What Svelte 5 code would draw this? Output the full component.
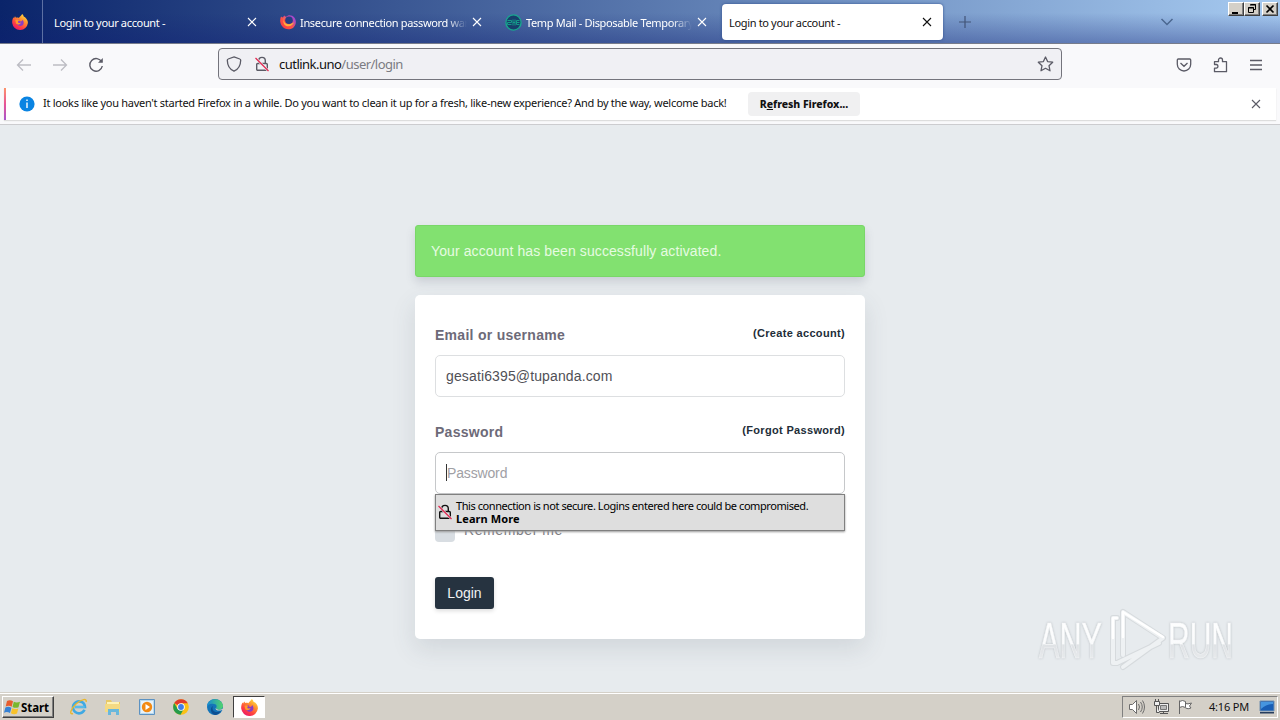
<script>
  const tabs = [
    { title: 'Login to your account -', icon: '' },
    { title: 'Insecure connection password war', icon: 'firefox' },
    { title: 'Temp Mail - Disposable Temporary E', icon: 'mail' },
    { title: 'Login to your account -', icon: '', active: true }
  ];
</script>

{#snippet firefox(size, id)}
  <svg width={size} height={size} viewBox="0 0 16 16">
    <defs>
      <linearGradient id={'fx' + id} x1="0.9" y1="0" x2="0.25" y2="1">
        <stop offset="0" stop-color="#fff14a" />
        <stop offset=".35" stop-color="#ff9a2e" />
        <stop offset=".7" stop-color="#ff4340" />
        <stop offset="1" stop-color="#e9156b" />
      </linearGradient>
    </defs>
    <path d="M10.2 0c1.1 1 1.5 2 1.7 2.8.5-.1.8.1 1.4.6C15 5 16 6.8 15.9 9A7.9 7.9 0 0 1 .2 9C0 6.500.6 4.700 1.500 3.200L2 4.200 3 2.300l1 1.500c1-.3 2-.2 2.900.1C7.700 2.600 9 2 10.200 0z" fill={`url(#fx${id})`} />
    <path d="M4.600 6.500c1.200-.9 2-1 3.300-.7-1.500.2-1 1.200.2 1.500 1.500.4 2-.3 2.400-1.600 2.200 2.500 1.300 6.200-2.100 6.300-2.800.1-4.700-2.800-3.800-5.500z" fill="#8a3cc5" />
    <path d="M3.300 6.300c1.400-.7 2.900-.6 4.200.1-1 .3-1.500.8-1.500 1.500 0 1 1.600 1.400 3 .6-1 2.400-3.500 2.600-5 1.100z" fill="#ff9b2b" />
  </svg>
{/snippet}

{#snippet lock(dark)}
  <svg width="16" height="16" viewBox="0 0 16 16" fill="none" stroke={dark ? '#111' : '#5b5b66'} stroke-width="1.400">
    <path d="M4.700 6.500V4.700a3.300 3.300 0 0 1 6.600 0v2.800M3.700 7.500h8.600a1 1 0 0 1 1 1v4.800a1 1 0 0 1-1 1H3.700a1 1 0 0 1-1-1V8.500a1 1 0 0 1 1-1z" />
    <path d="M1.500 2 14.500 15" stroke={dark ? '#dedede' : '#f0f0f4'} stroke-width="2.400" />
    <path d="M1.500 2 14.500 15" stroke="#e22850" stroke-width="1.300" />
  </svg>
{/snippet}

{#snippet cross()}
  <svg width="10" height="10" viewBox="0 0 10 10" fill="none" stroke="currentColor" stroke-width="1.100"><path d="m1 1 8 8M9 1 1 9" /></svg>
{/snippet}

<div class="screen">
  <header class="tabbar">
    <div class="home">{@render firefox(16, 'home')}</div>
    <div class="tabs">
      {#each tabs as tab}
        <div class="tab" class:active={tab.active} class:iconed={tab.icon}>
          {#if tab.icon === 'firefox'}
            <svg class="favicon" width="16" height="16" viewBox="0 0 16 16">
              <defs><linearGradient id="ring" x1="1" y1="0" x2="0" y2="1"><stop offset="0" stop-color="#8c45ee" /><stop offset=".28" stop-color="#b84bb1" /><stop offset=".55" stop-color="#ff5148" /><stop offset="1" stop-color="#f9373f" /></linearGradient></defs>
              <path d="M1 2.500 2.500 3.500 4.500 1.500 6 3C8 .5 12 .7 14.300 3.500c2.300 2.900 2 7.200-.6 9.800-3.300 3.200-9 2.600-11.700-1.200C-.3 8.900-.2 5.500 1 2.500z" fill="url(#ring)" />
              <circle cx="9" cy="6.200" r="3.800" fill="#263f82" />
              <path d="M6 3C3.500 4 3 5 4 7c1.100 3.600 5 4.500 10 1.200-1.600 4.800-8 5.500-10 1.700-1.300-2.500-.5-5.500 2-6.900z" fill="#ffb13c" />
            </svg>
          {:else if tab.icon === 'mail'}
            <svg class="favicon" width="17" height="17" viewBox="0 0 17 17"><circle cx="8.500" cy="8.500" r="7.600" fill="#173f6b" stroke="#18a68e" stroke-width="1.400" /><g fill="none" stroke="#149b89"><path d="M2.500 6.500h4v2h-4v2h4M8 5.500v6M10 5.500v6M8 8.500h2M14.500 6.500h-3v4h3M12 8.500h2.500" /></g></svg>
          {/if}
          <span class="title">{tab.title}</span>
          <span class="close">{@render cross()}</span>
        </div>
      {/each}
    </div>
    <svg class="plus" width="12" height="12" viewBox="0 0 12 12" stroke="#425477" stroke-width="1.200"><path d="M6 0v12M0 6h12" /></svg>
    <svg class="chevron" width="14" height="8" viewBox="0 0 14 8" fill="none" stroke="#4b6790" stroke-width="1.500"><path d="m1.500 1 5.500 5.500L12.500 1" /></svg>
    <div class="controls">
      <span class="ctl"><svg width="14" height="12"><path d="M3 9h6v2H3z" /></svg></span>
      <span class="ctl"><svg width="14" height="12" fill="none" stroke="#000"><path d="M5.500 1.500h5v5h-2M5 2h6M3.500 4.500h5v5h-5zM3 5h6" /></svg></span>
      <span class="ctl last"><svg width="14" height="12" fill="none" stroke="#000" stroke-width="1.700"><path d="m3.500 2.500 7 7m0-7-7 7" /></svg></span>
    </div>
  </header>

  <nav>
    <div class="history">
      <svg width="16" height="14" viewBox="0 0 16 14" fill="none" stroke="#bdbdc3" stroke-width="1.300"><path d="M15 7H1.500M7 1.500 1.500 7 7 12.500" /></svg>
      <svg width="16" height="14" viewBox="0 0 16 14" fill="none" stroke="#bdbdc3" stroke-width="1.300"><path d="M1 7h13.500M9 1.500 14.500 7 9 12.500" /></svg>
      <svg width="16" height="16" viewBox="0 0 16 16" fill="none" stroke="#5b5b66" stroke-width="1.400"><path d="M13.700 5A6.300 6.300 0 1 0 14.300 9" /><path d="M14.800 1v4.700H10z" fill="#5b5b66" stroke="none" /></svg>
    </div>
    <div class="url">
      <svg width="16" height="16" viewBox="0 0 16 16" fill="none" stroke="#5b5b66" stroke-width="1.300"><path d="M8 .9 13.800 3c.6.200.9.700.9 1.300C14.600 9 12.500 13.300 8 15.200 3.500 13.300 1.400 9 1.300 4.300c0-.6.300-1.100.9-1.300z" /></svg>
      <span class="lock">{@render lock(false)}</span>
      <span class="address">cutlink.uno<i>/user/login</i></span>
      <svg class="star" width="17" height="16" viewBox="0 0 17 16" fill="none" stroke="#5b5b66" stroke-width="1.300" stroke-linejoin="round"><path d="m8.500 1 2.100 4.600 5.100.6-3.700 3.500 1 5.100-4.500-2.500L4 14.800l1-5.100L1.300 6.200l5.100-.6z" /></svg>
    </div>
    <div class="tools">
      <svg width="16" height="16" viewBox="0 0 16 16" fill="none" stroke="#5b5b66" stroke-width="1.300"><path d="M2.300 2h11.400c.6 0 1 .4 1 1v4.300a6.700 6.700 0 0 1-13.400 0V3c0-.6.400-1 1-1zM4.500 6 8 9.300 11.500 6" /></svg>
      <svg width="16" height="16" viewBox="0 0 16 16" fill="none" stroke="#5b5b66" stroke-width="1.300" stroke-linejoin="round"><path d="M1.500 7.500V4.700h4V3a2 2 0 0 1 4 0v1.700h4v10h-12v-3.500h2a1.900 1.900 0 0 0 0-3.700z" /></svg>
      <svg width="14" height="12" viewBox="0 0 14 12" stroke="#5b5b66" stroke-width="1.300"><path d="M1 1.500h12M1 6h12M1 10.500h12" /></svg>
    </div>
  </nav>

  <aside>
    <div class="notice">
      <svg class="info" width="16" height="16" viewBox="0 0 16 16"><circle cx="8" cy="8" r="7.600" fill="#0a84e2" /><path d="M7.300 3.500h1.400V5H7.300zM7.300 6.500h1.400V12H7.300z" fill="#fff" /></svg>
      <span class="message">It looks like you haven't started Firefox in a while. Do you want to clean it up for a fresh, like-new experience? And by the way, welcome back!</span>
      <button class="refresh">R<u>e</u>fresh Firefox...</button>
      <span class="dismiss">{@render cross()}</span>
    </div>
  </aside>

  <main>
    <div class="alert"><span>Your account has been successfully activated.</span></div>
    <section class="card">
      <div class="label"><b>Email or username</b><a href="#create">(Create account)</a></div>
      <div class="input"><span class="email">gesati6395@tupanda.com</span></div>
      <div class="label second"><b>Password</b><a href="#forgot">(Forgot Password)</a></div>
      <div class="input focused">
        <i class="caret"></i><span class="placeholder">Password</span>
        <div class="warning">
          {@render lock(true)}
          <p><span>This connection is not secure. Logins entered here could be compromised.</span><b>Learn More</b></p>
        </div>
      </div>
      <div class="remember"><i></i><span>Remember me</span></div>
      <button class="login">Login</button>
    </section>
    <div class="watermark">
      <svg width="210" height="66" viewBox="0 0 210 66">
        <defs><linearGradient id="wm" x2="0" y2="1"><stop offset="0" stop-color="#fff" /><stop offset=".55" stop-color="#fafbfc" /><stop offset=".57" stop-color="#dfe2e5" /><stop offset="1" stop-color="#eef0f2" /></linearGradient></defs>
        <g class="brand" fill="url(#wm)" stroke="#f4f6f7" stroke-width=".6">
          <text x="5" y="51" textLength="63" lengthAdjust="spacingAndGlyphs">ANY</text>
          <text x="134" y="51" textLength="65" lengthAdjust="spacingAndGlyphs">RUN</text>
        </g>
        <g class="mark" fill="none" stroke-linejoin="round" stroke-linecap="round">
          <path d="M83 11h-4v45h4l42-20M89 5v43M89 5l40 26-40 29" stroke="#d6dadd" stroke-width="6" />
          <path d="M83 11h-4v45h4l42-20M89 5v43M89 5l40 26-40 29" stroke="#eef1f3" stroke-width="4" />
          <path d="M83 11h-4v20M89 30V5l40 25" stroke="#fff" stroke-width="2.500" />
        </g>
      </svg>
    </div>
  </main>

  <footer>
    <button class="start">
      <svg width="17" height="16" viewBox="0 0 17 16"><path d="M3 2c2-1 4-.8 6 .3L7.700 7.700C6 6.600 4 6.500 1.700 7.400z" fill="#e75c2d" /><path d="M9.800 2.800c2 1 4 .9 6.200 0l-1.500 5.400c-2 .8-4 .8-6-.3z" fill="#79b72e" /><path d="M1.400 8.400c2.200-1 4-.8 6 .3L6 14c-2-1.100-4-1.200-6-.3z" fill="#3681d4" /><path d="M8.200 9.200c2 1 4 1 6.100.2L13 14.500c-2 .9-4 .9-6.100-.2z" fill="#f8c22b" /></svg>
      <span>Start</span>
    </button>
    <div class="pinned">
      <svg width="18" height="18" viewBox="0 0 18 18" fill="none"><path d="M14.500 11.800A6 6 0 1 1 15 9H5" stroke="#3fa9e3" stroke-width="2.600" /><path d="M5 9h9.700" stroke="#72cdf0" /><path d="M3 15.500C-1 17 .5 11 6 6S17.500 0 16 4" stroke="#e9b72d" stroke-width="1.400" /></svg>
      <svg width="18" height="18" viewBox="0 0 18 18"><path d="M2 2h5l1 2h8v9H2z" fill="#e8c967" /><path d="M3 4h12v6H3z" fill="#fff3b5" /><path d="M1 6h15v8H1z" fill="#f4da83" /><path d="M4 17v-6h11v6h-3v-3H7v3z" fill="#6ab8dc" /></svg>
      <svg width="18" height="18" viewBox="0 0 18 18"><path d="M1.500 1.500h15v15h-15z" fill="#b8d9ef" stroke="#5c92c2" /><path d="M3 3h12v12H3z" fill="#e7f2fa" /><circle cx="9" cy="9" r="5.200" fill="#f28a13" /><path d="m7.500 6 4.500 3-4.500 3z" fill="#fff" /></svg>
      <svg width="18" height="18" viewBox="0 0 18 18"><circle cx="9" cy="9" r="7.800" fill="#fbc116" /><path d="M9 9 2.200 5.100A7.800 7.800 0 0 1 15.800 5.200H9z" fill="#df3b2d" /><path d="M2.200 5.100A7.800 7.800 0 0 0 8.500 16.800L12 10.500 9 9 5.700 11z" fill="#259b4b" /><circle cx="9" cy="9" r="3.800" fill="#fff" /><circle cx="9" cy="9" r="2.900" fill="#3f7ee8" /></svg>
      <svg width="18" height="18" viewBox="0 0 18 18"><defs><linearGradient id="edge"><stop stop-color="#168ad5" /><stop offset="1" stop-color="#52d56b" /></linearGradient></defs><circle cx="9" cy="9" r="8" fill="#1474b8" /><path d="M1 8C2-1 16-1 17 8c0 4-6 5-7 2 1-1 1-4-2-4C4 5 2 7 1 9z" fill="url(#edge)" /><path d="M7 8c-2 4 2 8 8 5-1 2-3 3-5 4-5 0-7-7-3-9z" fill="#0d4f92" /><path d="M9.500 10c0 3 4 3 6.500 2l2 1V9c-1 3-6 4-8.500 1z" fill="#d4d0c8" /></svg>
    </div>
    <div class="running">{@render firefox(17, 'task')}</div>
    <div class="tray">
      <svg width="18" height="16" viewBox="0 0 18 16" fill="#fff" stroke="#6c6c6c"><path d="M1.500 5.500h3l4-4v13l-4-4h-3z" /><path d="M10.500 5q2 3 0 6M12.500 3q3.500 5 0 10M14.500 1.500q4 6.500 0 13" fill="none" /></svg>
      <svg width="17" height="16" viewBox="0 0 17 16" fill="#eee" stroke="#555"><path d="M5.500 4.500h10v8h-10zM10.500 12.500v2M7 14.500h8" /><path d="M7.500 6.500h6v4h-6z" fill="#bbb" stroke="#777" /><path d="M1.500 2.500h5v4h-5zM2.500 0v2M5.500 0v2M3.500 6.500v7h3" /></svg>
      <svg width="16" height="16" viewBox="0 0 16 16" fill="#fff" stroke="#666"><path d="M2.500 15V1.500M2.500 2.500q3-2 6 0v6q-3-2-6 0zM8.500 4.500q2 1 6-.5l-2 3 1.500 2q-3 1.500-5.500 0" /></svg>
      <time>4:16 PM</time>
      <svg width="17" height="14" viewBox="0 0 17 14"><path d="M1 1h14v10H1z" fill="#195eb5" stroke="#7390af" /><path d="M2 2h12v2Q7 4 2 9z" fill="#4695df" /><path d="M1 12h14v1.500H1z" fill="#263d5d" /></svg>
    </div>
  </footer>
</div>

<style>
  :global(body) { margin: 0; overflow: hidden; }
  * { box-sizing: border-box; }
  svg { display: block; flex: none; }
  i { font-style: normal; }
  span, b, a, time { white-space: nowrap; }
  .screen { width: 1280px; height: 720px; display: grid; grid-template-rows: 44px 43px 38px 568px 27px; overflow: hidden; font: 11px/14px "Noto Sans", sans-serif; color: #111; }

  .tabbar { display: flex; background: linear-gradient(180deg, transparent 30%, rgba(15, 30, 115, .36)), linear-gradient(90deg, #0a246a, #a6caf0); border-bottom: 1px solid #777c8b; }
  .home { width: 43px; border-right: 1px solid #5d70a3; padding: 14px 0 0 12px; }
  .tabs { display: flex; gap: 4px; padding: 4px 0 3px 4px; }
  .tab { width: 221px; height: 36px; display: flex; align-items: center; padding: 0 11px 0 7px; color: #fff; border-radius: 4px; }
  .iconed { padding-left: 8px; }
  .favicon { margin-right: 4px; }
  .title { flex: 1; min-width: 0; margin-right: 5px; padding-top: 2px; letter-spacing: -.34px; }
  .iconed .title { mask-image: linear-gradient(90deg, #000 88%, transparent); }
  .active { background: #fff; color: #111; box-shadow: 0 0 3px #314f8d; }
  .plus { margin: 16px 0 0 16px; }
  .chevron { margin: 18px 0 0 189px; }
  .controls { display: flex; margin: 2px 2px 0 auto; }
  .ctl { width: 16px; height: 14px; background: #d4d0c8; border: 1px solid; border-color: #fff #404040 #404040 #fff; box-shadow: inset -1px -1px #808080; }
  .last { margin-left: 2px; }

  nav { display: flex; align-items: center; background: #f9f9fb; }
  .history { display: flex; align-items: center; gap: 20px; width: 218px; padding-left: 16px; }
  .url { width: 844px; height: 32px; margin-top: -4px; border: 1px solid #74747c; border-radius: 4px; background: #f0f0f4; display: flex; align-items: center; padding: 0 7px; }
  .history, .tools { margin-top: -2px; }
  .lock { margin: 0 9px 0 12px; }
  .address { font-size: 13px; letter-spacing: -.52px; }
  .address i { color: #7b7b82; }
  .star { margin-left: auto; }
  .tools { display: flex; align-items: center; gap: 20.500px; padding-left: 114px; }

  aside { background: #f9f9fb; border-bottom: 1px solid #cccccf; padding: 1px 4px 3px; }
  .notice { display: flex; align-items: center; height: 32px; background: #fff; border-left: 2px solid; border-image: linear-gradient(#ff9868, #e75496, #a355cf) 1; box-shadow: 0 1px 1px #ddd; padding-left: 13px; }
  .message { margin: -2px 21px 0 8px; width: 684px; letter-spacing: -.275px; }
  .refresh { width: 112px; height: 24px; border: 0; border-radius: 4px; background: #f0f0f1; font: 800 10.5px "Noto Sans", sans-serif; letter-spacing: -.05px; padding: 0; color: #111; white-space: nowrap; }
  .dismiss { margin-left: auto; margin-right: 15px; color: #5b5b66; }

  main { background: #e7ebee; position: relative; padding: 100px 415px 0; }
  .alert { height: 52px; background: #82e170; border: 1px solid #79d768; border-radius: 3px; box-shadow: 0 5px 10px rgba(70, 75, 100, .18); color: #e6fbe1; padding: 15px; font: 14px/20px "Liberation Sans", sans-serif; }
  .alert span { letter-spacing: .1px; }
  .card { height: 344px; margin-top: 18px; border-radius: 5px; background: #fff; box-shadow: 0 10px 24px rgba(60, 75, 90, .13); padding: 30px 20px; font: 14px/20px "Liberation Sans", sans-serif; color: #505056; }
  .label { height: 30px; display: flex; justify-content: space-between; color: #6d6a78; }
  .label b { letter-spacing: .28px; }
  .label a { font: bold 11px/16px "Liberation Sans", sans-serif; color: #222d38; text-decoration: none; letter-spacing: .33px; }
  .second { margin-top: 25px; }
  .input { height: 42px; border: 1px solid #dddfe1; border-radius: 5px; padding: 10px; display: flex; position: relative; }
  .email { letter-spacing: .13px; }
  .focused { border-color: #c6c8ca; }
  .caret { width: 1px; height: 17px; background: #333; margin-top: 1px; }
  .placeholder { color: #a0a0a5; letter-spacing: -.15px; }
  .warning { position: absolute; z-index: 2; left: -1px; top: 41px; width: 410px; height: 37px; background: #dedede; border: 1px solid #808080; box-shadow: 0 1px 2px #999; color: #000; font: 11px/13px "Noto Sans", sans-serif; padding: 4px 1px 6px; display: flex; align-items: center; gap: 3px; }
  .warning p { margin: 0; display: flex; flex-direction: column; }
  .warning p span { letter-spacing: -.43px; }
  .warning p b { letter-spacing: .1px; }
  .remember { display: flex; align-items: center; height: 20px; margin-top: 28px; color: #7b7b82; letter-spacing: .58px; }
  .remember span { padding-bottom: 4px; }
  .remember i { width: 20px; height: 20px; border-radius: 4px; background: #d8dde2; margin-right: 9px; }
  .login { display: block; width: 59px; height: 32px; margin-top: 35px; border: 0; border-radius: 3px; background: #263340; color: #f1f2f3; font: 14px "Liberation Sans", sans-serif; box-shadow: 0 2px 4px #ddd; }
  .watermark { position: absolute; left: 1034px; top: 482px; }
  .brand { font: 50px "Liberation Sans", sans-serif; filter: drop-shadow(0 0 1px #b8bdc1); }

  footer { background: #d4d0c8; border-top: 1px solid #fff; display: flex; align-items: center; padding: 1px 2px; box-shadow: 0 -1px #d4d0c8; z-index: 1; }
  .start { width: 52px; height: 22px; padding: 0 1px; display: flex; align-items: center; gap: 0; border: 1px solid; border-color: #fff #404040 #404040 #fff; box-shadow: inset -1px -1px #808080; background: #d4d0c8; font: bold 11.500px "Noto Sans", sans-serif; letter-spacing: -.1px; }
  .pinned { display: flex; gap: 16px; margin-left: 16px; }
  .running { width: 32px; height: 22px; margin-left: 9px; background: #fff; border: 1px solid; border-color: #404040 #fff #fff #404040; display: grid; place-items: center; }
  .tray { width: 156px; height: 22px; margin-left: auto; display: flex; align-items: center; padding-left: 5px; border: 1px solid; border-color: #808080 #fff #fff #808080; gap: 7px; }
  .tray time { margin: 0 3px 0 9px; letter-spacing: -.2px; }
</style>
